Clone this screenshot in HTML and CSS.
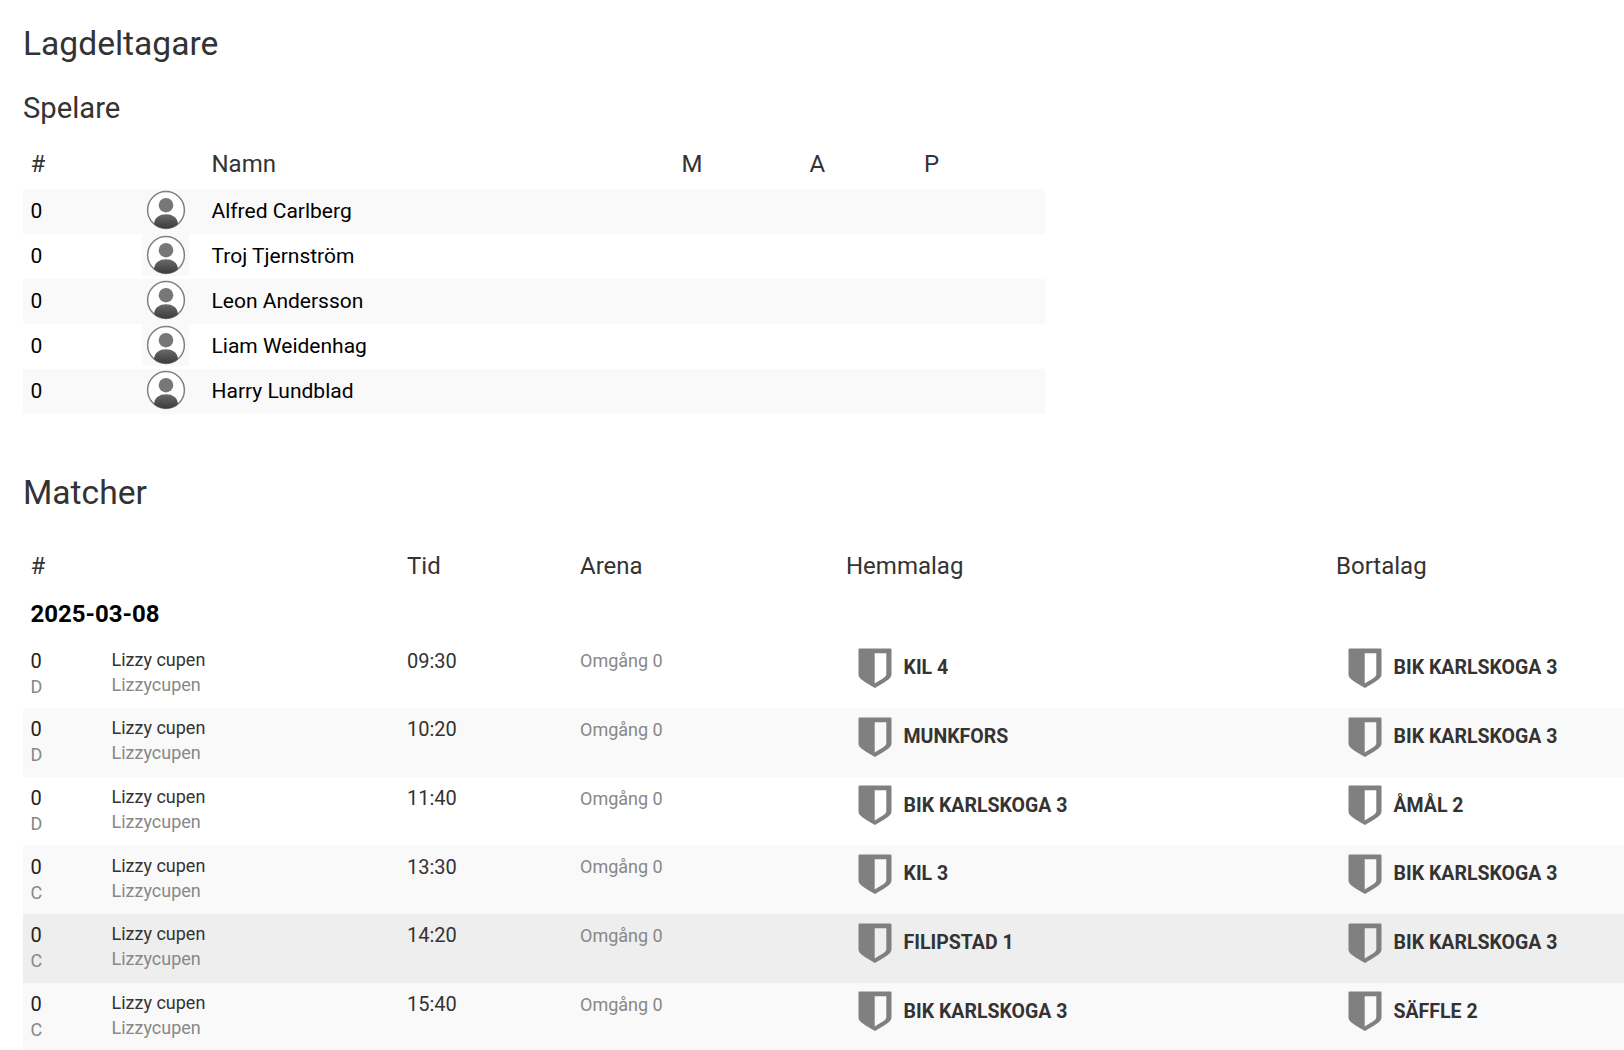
FILE: index.html
```html
<!DOCTYPE html>
<html lang="sv">
<head>
<meta charset="utf-8">
<title>Lagdeltagare</title>
<link rel="stylesheet" href="styles.css">
</head>
<body>
<svg class="defs" width="0" height="0" aria-hidden="true">
  <defs>
    <linearGradient id="bust" x1="0" y1="0" x2="0" y2="1">
      <stop offset="0" stop-color="#6a6a6a"/>
      <stop offset="1" stop-color="#3c3c3c"/>
    </linearGradient>
    <symbol id="avatar" viewBox="0 0 40 40">
      <circle cx="20" cy="20" r="18.4" fill="#fff" stroke="#808080" stroke-width="1.5"/>
      <circle cx="20" cy="15.200" r="7.300" fill="#777"/>
      <path d="M8 34C8.500 27.500 13.500 24.200 20 24.200S31.500 27.500 32 34C29 37 25 38.400 20 38.400S11 37 8 34Z" fill="url(#bust)"/>
    </symbol>
    <symbol id="shield" viewBox="0 0 34 40">
      <path fill-rule="evenodd" d="M.5 1.500Q.5.500 1.500.500H32.500Q33.500.500 33.500 1.500V26C33.500 30 31 32 17 40C3 32 .5 30 .5 26ZM16.700 5.300V35.500C26 30 28.300 28.500 28.300 26V5.300Z" fill="#808080"/>
    </symbol>
  </defs>
</svg>
<main class="page">
  <h2 class="title">Lagdeltagare</h2>
  <h3 class="subtitle">Spelare</h3>
  <table class="players">
    <thead>
      <tr><th class="p-num">#</th><th class="p-img"></th><th class="p-name">Namn</th><th class="p-m">M</th><th class="p-a">A</th><th class="p-p">P</th></tr>
    </thead>
    <tbody>
      <tr><td>0</td><td class="avatar-cell"><span class="avatar"><svg width="40" height="40"><use href="#avatar"/></svg></span></td><td>Alfred Carlberg</td><td></td><td></td><td></td></tr>
      <tr><td>0</td><td class="avatar-cell"><span class="avatar"><svg width="40" height="40"><use href="#avatar"/></svg></span></td><td>Troj Tjernström</td><td></td><td></td><td></td></tr>
      <tr><td>0</td><td class="avatar-cell"><span class="avatar"><svg width="40" height="40"><use href="#avatar"/></svg></span></td><td>Leon Andersson</td><td></td><td></td><td></td></tr>
      <tr><td>0</td><td class="avatar-cell"><span class="avatar"><svg width="40" height="40"><use href="#avatar"/></svg></span></td><td>Liam Weidenhag</td><td></td><td></td><td></td></tr>
      <tr><td>0</td><td class="avatar-cell"><span class="avatar"><svg width="40" height="40"><use href="#avatar"/></svg></span></td><td>Harry Lundblad</td><td></td><td></td><td></td></tr>
    </tbody>
  </table>
  <h2 class="title matches-title">Matcher</h2>
  <table class="matches">
    <thead>
      <tr><th class="m-num">#</th><th class="m-series"></th><th class="m-time">Tid</th><th class="m-arena">Arena</th><th class="m-home">Hemmalag</th><th class="m-away">Bortalag</th></tr>
    </thead>
    <tbody>
      <tr class="date-row"><td colspan="6">2025-03-08</td></tr>
      <tr class="match"><td class="num"><div>0</div><div class="muted">D</div></td><td class="series"><div>Lizzy cupen</div><div class="muted">Lizzycupen</div></td><td class="time">09:30</td><td class="round">Omgång 0</td><td class="side"><div class="team"><svg width="34" height="40"><use href="#shield"/></svg><span>KIL 4</span></div></td><td class="side"><div class="team"><svg width="34" height="40"><use href="#shield"/></svg><span>BIK KARLSKOGA 3</span></div></td></tr>
      <tr class="match"><td class="num"><div>0</div><div class="muted">D</div></td><td class="series"><div>Lizzy cupen</div><div class="muted">Lizzycupen</div></td><td class="time">10:20</td><td class="round">Omgång 0</td><td class="side"><div class="team"><svg width="34" height="40"><use href="#shield"/></svg><span>MUNKFORS</span></div></td><td class="side"><div class="team"><svg width="34" height="40"><use href="#shield"/></svg><span>BIK KARLSKOGA 3</span></div></td></tr>
      <tr class="match"><td class="num"><div>0</div><div class="muted">D</div></td><td class="series"><div>Lizzy cupen</div><div class="muted">Lizzycupen</div></td><td class="time">11:40</td><td class="round">Omgång 0</td><td class="side"><div class="team"><svg width="34" height="40"><use href="#shield"/></svg><span>BIK KARLSKOGA 3</span></div></td><td class="side"><div class="team"><svg width="34" height="40"><use href="#shield"/></svg><span>ÅMÅL 2</span></div></td></tr>
      <tr class="match"><td class="num"><div>0</div><div class="muted">C</div></td><td class="series"><div>Lizzy cupen</div><div class="muted">Lizzycupen</div></td><td class="time">13:30</td><td class="round">Omgång 0</td><td class="side"><div class="team"><svg width="34" height="40"><use href="#shield"/></svg><span>KIL 3</span></div></td><td class="side"><div class="team"><svg width="34" height="40"><use href="#shield"/></svg><span>BIK KARLSKOGA 3</span></div></td></tr>
      <tr class="match hover"><td class="num"><div>0</div><div class="muted">C</div></td><td class="series"><div>Lizzy cupen</div><div class="muted">Lizzycupen</div></td><td class="time">14:20</td><td class="round">Omgång 0</td><td class="side"><div class="team"><svg width="34" height="40"><use href="#shield"/></svg><span>FILIPSTAD 1</span></div></td><td class="side"><div class="team"><svg width="34" height="40"><use href="#shield"/></svg><span>BIK KARLSKOGA 3</span></div></td></tr>
      <tr class="match"><td class="num"><div>0</div><div class="muted">C</div></td><td class="series"><div>Lizzy cupen</div><div class="muted">Lizzycupen</div></td><td class="time">15:40</td><td class="round">Omgång 0</td><td class="side"><div class="team"><svg width="34" height="40"><use href="#shield"/></svg><span>BIK KARLSKOGA 3</span></div></td><td class="side"><div class="team"><svg width="34" height="40"><use href="#shield"/></svg><span>SÄFFLE 2</span></div></td></tr>
    </tbody>
  </table>
</main>
</body>
</html>
```
FILE: styles.css
```css
* { box-sizing: border-box; }
html, body { margin: 0; height: 1050px; overflow: hidden; background: #fff; }
body { font-family: Roboto, sans-serif; color: #000; font-size: 20px; }
.defs { position: absolute; }
.page { padding: 25px 0 0 23px; width: 1624px; }
.title { margin: 0; font-size: 33.6px; font-weight: 400; line-height: 38px; color: #333; }
.subtitle { margin: 28px 0 0; font-size: 29.2px; font-weight: 400; line-height: 34px; color: #333; }
table { border-collapse: collapse; table-layout: fixed; }
th { font-weight: 400; text-align: left; color: #333; font-size: 24px; padding: 0 7.5px; }
td { padding: 0 7.5px; }
.players { width: 1022px; margin-top: 14px; font-size: 21px; }
.players thead tr { height: 50px; }
.players tbody tr { height: 45px; }
.players tbody tr:nth-child(odd) { background: #f9f9f9; }
.players td { padding-bottom: 2px; }
.p-num { width: 119px; } .p-img { width: 62px; } .p-name { width: 470px; } .p-m { width: 128px; } .p-a { width: 114.5px; }
.players td.avatar-cell { padding: 0; vertical-align: top; }
.avatar { display: flex; align-items: center; width: 47px; height: 42px; padding-left: 3.5px; background: #f9f9f9; }
.matches-title { margin-top: 60px; }
.matches { width: 1601px; margin-top: 28px; font-size: 20px; }
.matches thead tr { height: 52px; }
.date-row td { font-weight: 700; font-size: 24px; height: 47.33px; padding-bottom: 3px; }
.match { height: 68.67px; }
.match:nth-child(odd) { background: #f9f9f9; }
.match.hover { background: #eee; }
.match td { vertical-align: top; }
.m-num { width: 80.5px; } .m-series { width: 296px; } .m-time { width: 173px; } .m-arena { width: 266px; } .m-home { width: 490px; }
.muted { color: #888; }
.match td.num { padding-top: 8.5px; line-height: 26px; color: #222; }
.match td.num .muted { font-size: 18px; }
.match td.series { padding: 7.5px 7.5px 0 8px; font-size: 18px; line-height: 25px; color: #333; }
.match td.time { padding-top: 9.5px; line-height: 25px; color: #333; }
.match td.round { padding-top: 9px; font-size: 18px; line-height: 25px; color: #888; }
.match td.side { padding-top: 8.67px; }
.team { display: flex; align-items: center; gap: 12px; padding: 0 0 0 11.5px; font-weight: 700; font-size: 19.5px; color: #333; }
```
